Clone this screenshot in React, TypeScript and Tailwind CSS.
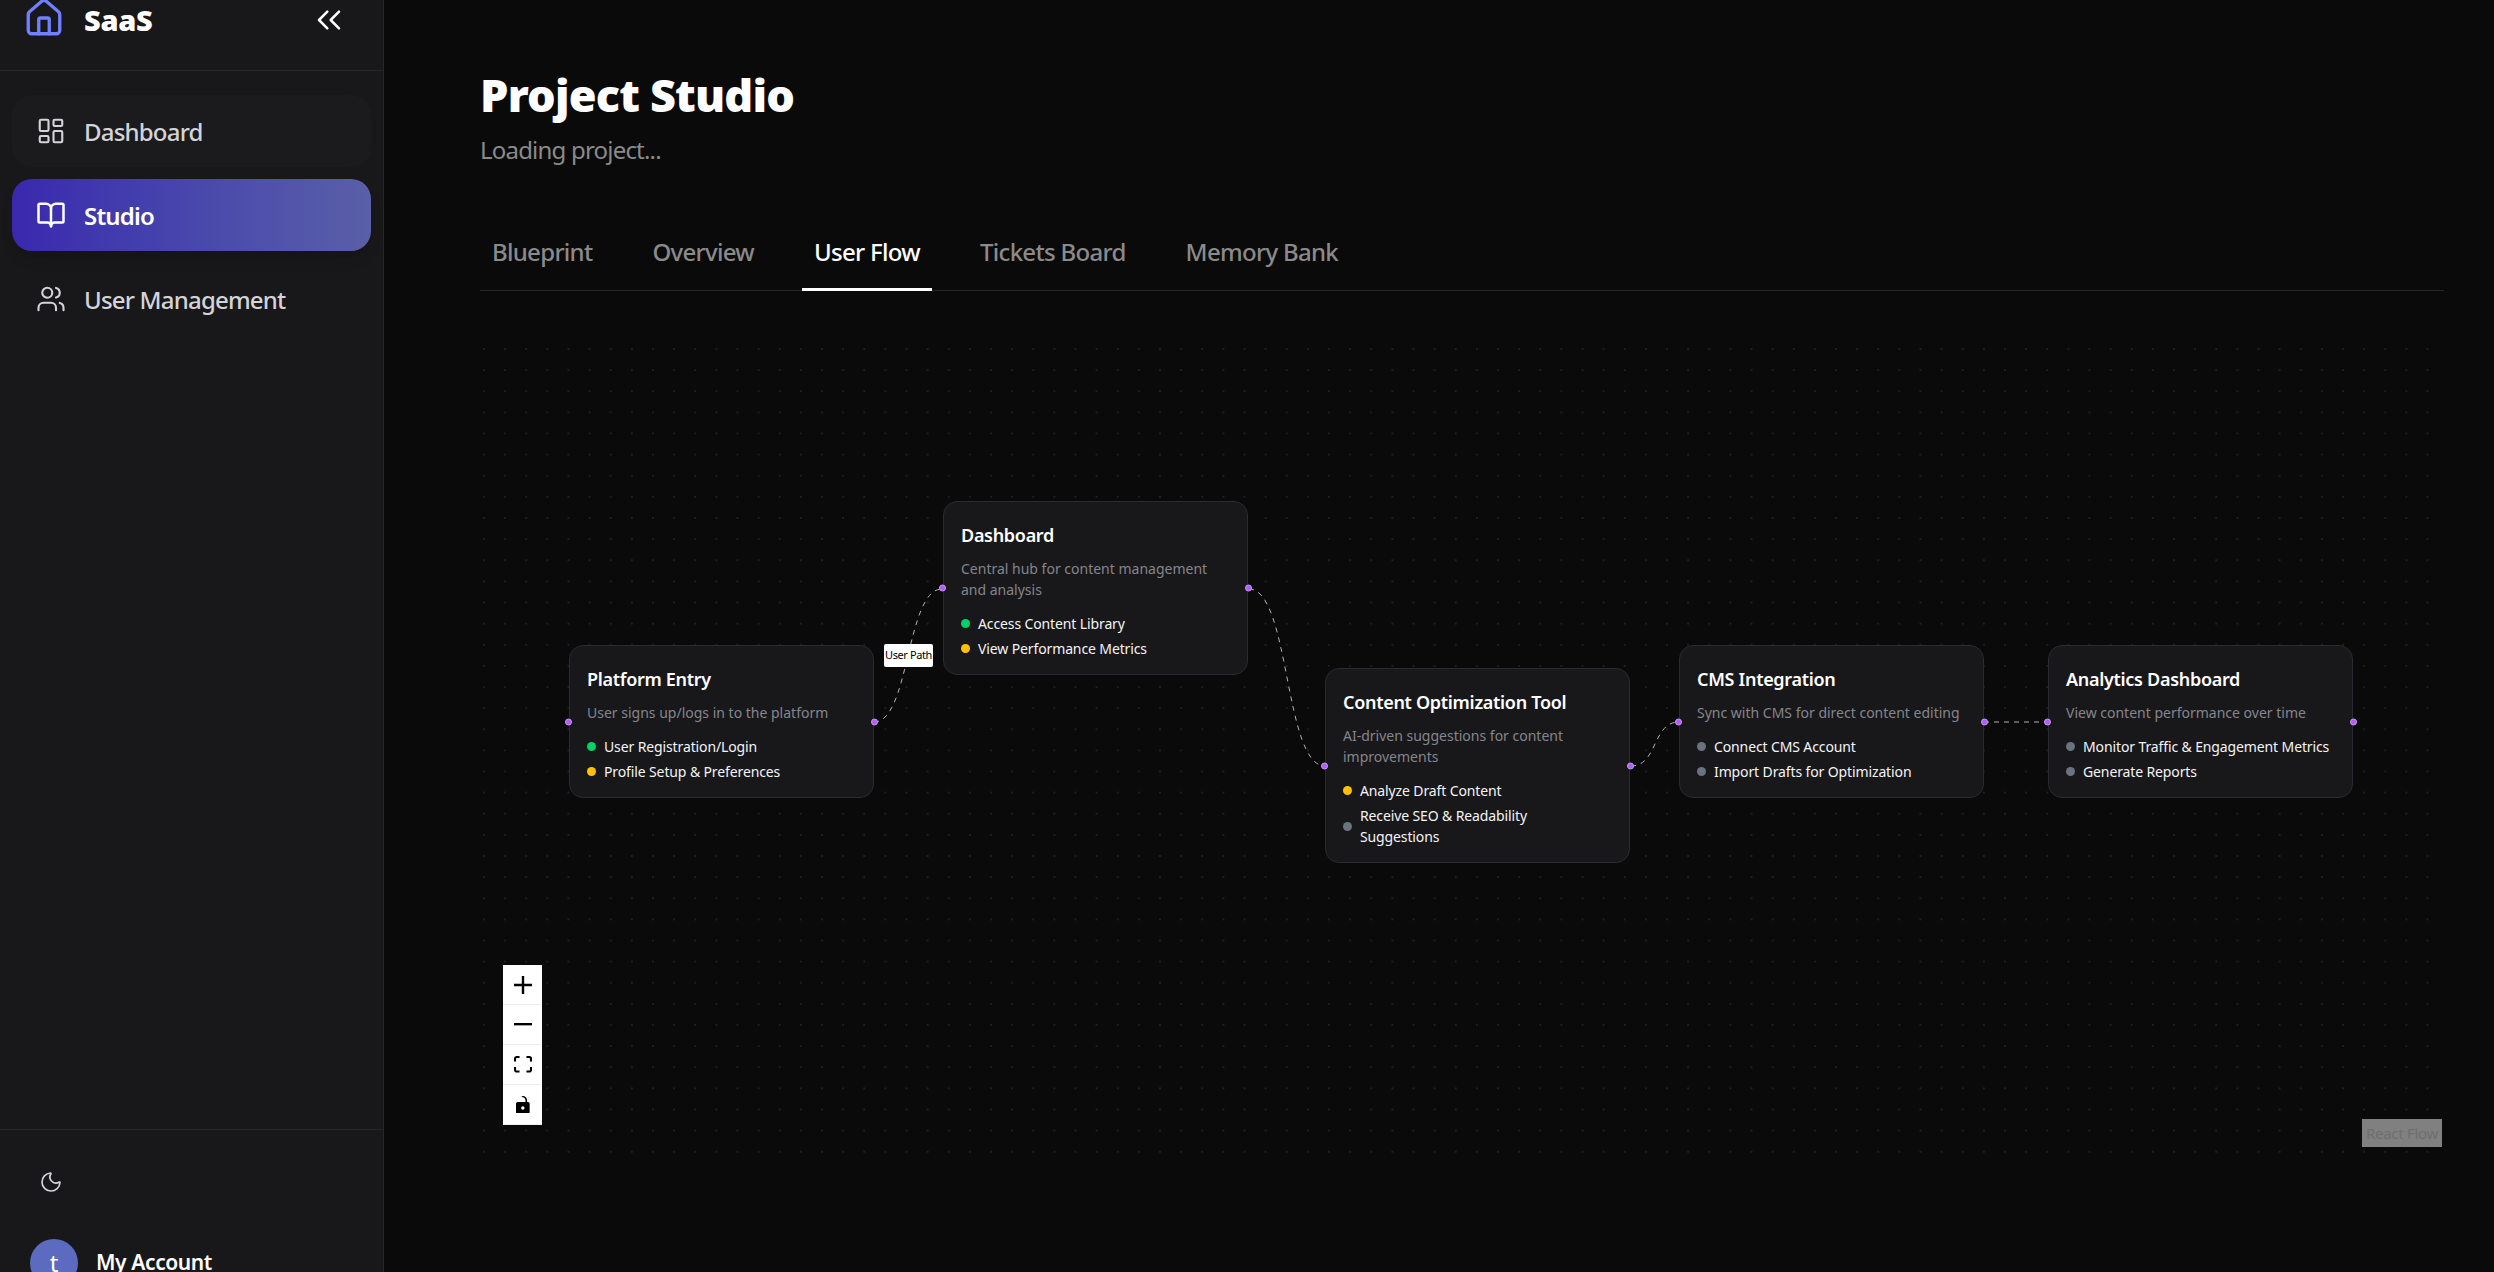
import { BookOpen, ChevronsLeft, House, LayoutDashboard, Moon, Users } from "lucide-react";

type Tone = "green" | "yellow" | "gray";
type FlowNode = { title: string; desc: string; left: string; top: string; items: [string, Tone][] };

const nodes: FlowNode[] = [
  { title: "Platform Entry", desc: "User signs up/logs in to the platform", left: "left-[89px]", top: "top-[354px]", items: [["User Registration/Login", "green"], ["Profile Setup & Preferences", "yellow"]] },
  { title: "Dashboard", desc: "Central hub for content management\nand analysis", left: "left-[463px]", top: "top-[210px]", items: [["Access Content Library", "green"], ["View Performance Metrics", "yellow"]] },
  { title: "Content Optimization Tool", desc: "AI-driven suggestions for content\nimprovements", left: "left-[845px]", top: "top-[377px]", items: [["Analyze Draft Content", "yellow"], ["Receive SEO & Readability\nSuggestions", "gray"]] },
  { title: "CMS Integration", desc: "Sync with CMS for direct content editing", left: "left-[1199px]", top: "top-[354px]", items: [["Connect CMS Account", "gray"], ["Import Drafts for Optimization", "gray"]] },
  { title: "Analytics Dashboard", desc: "View content performance over time", left: "left-[1568px]", top: "top-[354px]", items: [["Monitor Traffic & Engagement Metrics", "gray"], ["Generate Reports", "gray"]] },
];

const toneClass: Record<Tone, string> = { green: "bg-[#00d26a]", yellow: "bg-[#ffc107]", gray: "bg-[#6b7280]" };

function Handle({ side }: { side: "left" | "right" }) {
  return (
    <span className={`absolute top-1/2 size-[7px] -translate-y-1/2 rounded-full border border-[#c79af5] bg-[#b45cf5] ${side === "left" ? "left-[-5px]" : "right-[-5px]"}`} />
  );
}

function NodeCard({ node }: { node: FlowNode }) {
  return (
    <div className={`absolute ${node.left} ${node.top} w-[305px] rounded-[14px] border border-[#2a2a30] bg-[#18181b] px-[17px] pt-[20px] pb-[15px]`}>
      <Handle side="left" />
      <Handle side="right" />
      <h3 className="text-[18px] leading-[27px] font-semibold tracking-[-0.3px] text-white">{node.title}</h3>
      <p className="mt-[9px] text-[14px] leading-[21px] tracking-[0px] whitespace-pre-line text-[#85858c]">{node.desc}</p>
      <ul className="mt-[13px] flex flex-col gap-[4px]">
        {node.items.map(([label, tone]) => (
          <li key={label} className="flex items-center gap-[8px] text-[14px] leading-[21px] tracking-[-0.12px] whitespace-pre-line text-[#f4f4f5]">
            <span className={`size-[9px] shrink-0 rounded-full ${toneClass[tone]}`} />
            <span>{label}</span>
          </li>
        ))}
      </ul>
    </div>
  );
}

function Edges() {
  const paths = [
    "M394 431 C 430 431, 426 298, 462 298",
    "M769 298 C 810 298, 804 475, 845 475",
    "M1151 475 C 1178 475, 1172 431, 1199 431",
    "M1504 431 L 1568 431",
  ];
  return (
    <svg className="absolute inset-0 h-full w-full" fill="none">
      {paths.map((d) => (
        <path key={d} d={d} stroke="#b1b1b7" strokeWidth="1" strokeDasharray="5 5" />
      ))}
    </svg>
  );
}

function Controls() {
  const btn = "flex h-[40px] w-[39px] items-center justify-center border-b border-[#eeeeee] bg-white";
  return (
    <div className="absolute left-[23px] top-[674px] flex flex-col">
      <button className={btn}>
        <svg viewBox="0 0 32 32" className="w-[18px]"><path d="M32 18.133H18.133V32h-4.266V18.133H0v-4.266h13.867V0h4.266v13.867H32z" /></svg>
      </button>
      <button className={btn}>
        <svg viewBox="0 0 32 5" className="w-[18px]"><path d="M0 0h32v4.2H0z" /></svg>
      </button>
      <button className={btn}>
        <svg viewBox="0 0 32 30" className="w-[18px]"><path d="M3.692 4.63c0-.53.4-.938.939-.938h5.215V0H4.708C2.13 0 0 2.054 0 4.63v5.216h3.692V4.631zM27.354 0h-5.2v3.692h5.17c.53 0 .984.4.984.939v5.215H32V4.631A4.624 4.624 0 0027.354 0zm.954 24.83c0 .532-.4.94-.939.94h-5.215v3.768h5.215c2.577 0 4.631-2.13 4.631-4.707v-5.139h-3.692v5.139zm-23.677.94c-.531 0-.939-.4-.939-.94v-5.138H0v5.139c0 2.577 2.13 4.707 4.708 4.707h5.138V25.77H4.631z" /></svg>
      </button>
      <button className={btn}>
        <svg viewBox="0 0 25 32" className="w-[14px]"><path d="M21.333 10.667H19.81V7.619C19.81 3.429 16.38 0 12.19 0c-4.114 1.828-1.37 2.133.305 2.438 1.676.305 4.42 2.59 4.42 5.181v3.048H3.047A3.056 3.056 0 000 13.714v15.238A3.056 3.056 0 003.048 32h18.285a3.056 3.056 0 003.048-3.048V13.714a3.056 3.056 0 00-3.048-3.047zM12.19 24.533a3.056 3.056 0 01-3.047-3.047 3.056 3.056 0 013.047-3.048 3.056 3.056 0 013.048 3.048 3.056 3.056 0 01-3.048 3.047z" /></svg>
      </button>
    </div>
  );
}

function NavItem({ label, icon, active, tinted }: { label: string; icon: React.ReactNode; active?: boolean; tinted?: boolean }) {
  return (
    <a className={`flex h-[72px] items-center gap-[18px] rounded-[20px] pl-[24px] text-[24px] ${active ? "bg-linear-to-r from-[#3a27ae] to-[#5a5fa8] font-semibold text-white shadow-lg" : "font-medium text-[#d4d4d8]"} ${tinted ? "bg-[#1b1b1e]" : ""}`}>
      {icon}
      <span className="pt-[2px] tracking-[-0.8px]">{label}</span>
    </a>
  );
}

export default function App() {
  return (
    <div className="flex h-screen overflow-hidden bg-[#0a0a0a] font-['Noto_Sans',sans-serif]">
      <aside className="flex h-[1272px] w-[384px] shrink-0 flex-col border-r border-[#27272a] bg-[#18181b]">
        <header className="flex h-[71px] shrink-0 items-start justify-between border-b border-[#27272a] pl-[23px] pr-[34px]">
          <div className="flex items-center gap-[19px]">
            <House size={42} strokeWidth={1.9} className="-mt-[3px] text-[#7280ff]" />
            <span className="text-[29px] leading-[38px] font-black tracking-[-0.3px] text-white">SaaS</span>
          </div>
          <ChevronsLeft size={40} strokeWidth={1.5} className="text-white" />
        </header>
        <nav className="flex flex-col gap-[12px] px-[12px] pt-[24px]">
          <NavItem label="Dashboard" tinted icon={<LayoutDashboard size={30} strokeWidth={1.7} />} />
          <NavItem label="Studio" active icon={<BookOpen size={30} strokeWidth={2} />} />
          <NavItem label="User Management" icon={<Users size={30} strokeWidth={1.7} />} />
        </nav>
        <footer className="mt-auto h-[143px] shrink-0 border-t border-[#27272a] pl-[30px]">
          <Moon size={24} strokeWidth={1.7} className="ml-[9px] mt-[40px] text-[#d4d4d8]" />
          <div className="mt-[45px] flex items-center gap-[18px]">
            <span className="flex size-[48px] shrink-0 items-center justify-center rounded-full bg-[#5c6bc0] text-[24px] text-white">t</span>
            <span className="text-[21px] font-semibold tracking-[-0.4px] text-white">My Account</span>
          </div>
        </footer>
      </aside>
      <main className="flex h-[1272px] min-w-0 flex-1 flex-col pl-[96px] pr-[50px]">
        <div className="pt-[62px]">
          <h1 className="text-[45px] leading-[66px] font-black tracking-[-0.8px] text-white">Project Studio</h1>
          <p className="mt-[4px] text-[24px] leading-[36px] tracking-[-0.8px] text-[#8a8a8a]">Loading project...</p>
        </div>
        <div className="mt-[51px] flex h-[72px] shrink-0 gap-[36px] border-b border-[#27272a]">
          {["Blueprint", "Overview", "User Flow", "Tickets Board", "Memory Bank"].map((t) => (
            <button key={t} className={`-mb-px border-b-[3px] px-[12px] pb-[3px] text-[24px] font-medium tracking-[-0.7px] ${t === "User Flow" ? "border-white text-white" : "border-transparent text-[#8a8a8a]"}`}>
              {t}
            </button>
          ))}
        </div>
        <section className="relative min-h-0 flex-1 overflow-hidden">
          <div className="absolute inset-x-0 top-[48px] h-[822px] bg-[radial-gradient(#1f1f1f_0.8px,transparent_0.8px)] bg-[size:21.14px_21.14px] bg-[position:-6.57px_-0.57px]" />
          <Edges />
          {nodes.map((n) => (
            <NodeCard key={n.title} node={n} />
          ))}
          <div className="absolute left-[404px] top-[353px] flex h-[23px] w-[49px] items-center justify-center rounded-[2px] bg-white text-[11px] tracking-[-0.4px] text-black">User Path</div>
          <Controls />
          <div className="absolute right-[2px] top-[828px] flex h-[28px] w-[80px] items-center justify-center bg-[#808080] text-[15px] tracking-[-0.3px] text-[#6f6f6f]">React Flow</div>
        </section>
      </main>
    </div>
  );
}
